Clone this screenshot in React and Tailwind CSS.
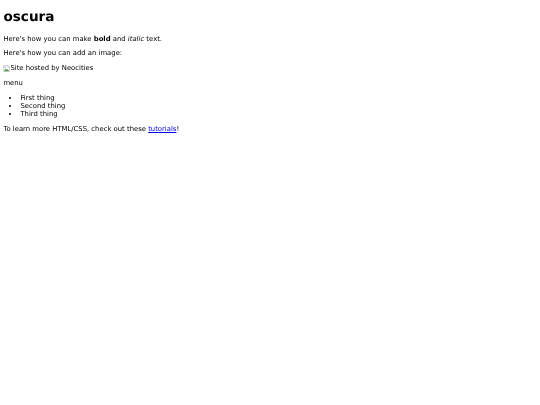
export default function App() {
  return (
    <div className="min-h-[405px] bg-white px-[3.4px] pt-[10px] font-['DejaVu_Sans',sans-serif] text-[6.85px] leading-[7.9px] text-black [text-rendering:geometricPrecision] blur-[0.35px]">
      <h1 className="mb-[9.9px] text-[13.6px] leading-[15.8px] font-bold">oscura</h1>
      <p className="mb-[6.8px]">Here's how you can make <b className="font-bold">bold</b> and <i className="italic">italic</i> text.</p>
      <p className="mb-[6.8px]">Here's how you can add an image:</p>
      <p className="mb-[6.8px] flex items-start">
        <svg width="7" height="7" viewBox="0 0 16 16" className="shrink-0" aria-hidden="true">
          <path d="M1 1h10l4 4v10H1z" fill="#fff" stroke="#a0a0a0" />
          <path d="M11 1v4h4" fill="#ddd" stroke="#a0a0a0" />
          <path d="M2 14l4-6 3 3 2-2 3 5z" fill="#5a9a4a" />
          <circle cx="5" cy="5" r="2" fill="#9cc3ee" />
        </svg>
        <span>Site hosted by Neocities</span>
      </p>
      <p className="mb-[7.6px]">menu</p>
      <ul className="mb-[6.6px] list-disc pl-[17px]">
        <li>First thing</li>
        <li>Second thing</li>
        <li>Third thing</li>
      </ul>
      <p>To learn more HTML/CSS, check out these <a href="#" className="text-[#0000ee] underline">tutorials</a>!</p>
    </div>
  );
}
